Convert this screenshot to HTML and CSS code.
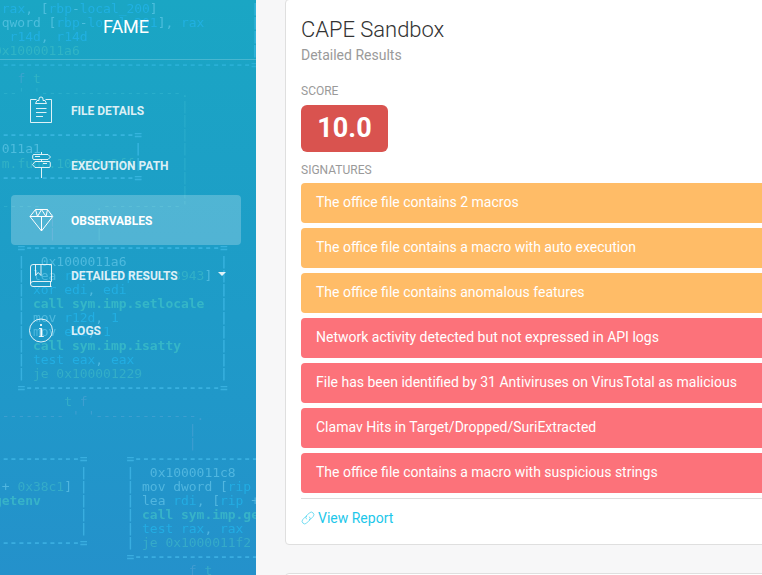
FILE: index.html
```html
<!DOCTYPE html>
<html lang="en">
<head>
<meta charset="utf-8">
<title>FAME</title>
<link rel="stylesheet" href="styles.css">
</head>
<body>
<div class="wrapper">
  <aside class="sidebar">
    <pre class="code" aria-hidden="true"> <i class="b">rax</i>, [<i class="b">rbp</i>-<i class="b">local_200</i>]            <i class="d">|</i>
 qword [<i class="b">rbp</i>-<i class="b">local_201</i>], <i class="b">rax</i>      <i class="d">|</i>
  <i class="b">r14d</i>, <i class="b">r14d</i>                     <i class="d">|</i>
<i class="g">0x1000011a6</i>                      <i class="d">|</i>
 <i class="d dim">--------------------------------=</i>
   <i class="f">f</i> <i class="g">t</i>
 <i class="k">--' '------------------.</i>
                        <i class="k">|</i>
                        <i class="k">|</i>
 <i class="d">-----------------=</i>     <i class="k">|</i>
 011a1            <i class="d">|</i>     <i class="k">|</i>
 <i class="g">m.func.100001a3ff</i><i class="d">|</i>     <i class="k">|</i>
 <i class="d">-----------------=</i>     <i class="k">|</i>
                        <i class="k">|</i>
 <i class="k">-----       .----------'</i>
       <i class="f">|</i>     <i class="k">|</i>
       <i class="f">|</i>     <i class="k">|</i>
   <i class="d">=-------------------------=</i>
   <i class="d">|</i>  0x1000011a6            <i class="d">|</i>
   <i class="d">|</i> lea <i class="b">rdi</i>, [<i class="b">rip</i> + <i class="g">0x3943</i>] <i class="d">|</i>
   <i class="d">|</i> <i class="b">xor edi</i>, <i class="b">edi</i>            <i class="d">|</i>
   <i class="d">|</i> <i class="h">call sym.imp.setlocale</i>  <i class="d">|</i>
   <i class="d">|</i> mov <i class="b">r12d</i>, <i class="b">1</i>             <i class="d">|</i>
   <i class="d">|</i> mov <i class="b">edi</i>, <i class="b">1</i>              <i class="d">|</i>
   <i class="d">|</i> <i class="h">call sym.imp.isatty</i>     <i class="d">|</i>
   <i class="d">|</i> <i class="b">test eax</i>, <i class="b">eax</i>           <i class="d">|</i>
   <i class="d">|</i> <i class="g">je 0x100001229</i>          <i class="d">|</i>
   <i class="d">=-------------------------=</i>
         <i class="g">t</i> <i class="f">f</i>
 <i class="f">-------- ' '-------------.</i>
                         <i class="f">|</i>
                         <i class="f">|</i>
 <i class="d">----------=     =----------------</i>
           <i class="d">|</i>     <i class="d">|</i>  0x1000011c8
 + <i class="g">0x38c1</i>] <i class="d">|</i>     <i class="d">|</i> mov dword [<i class="b">rip</i>
<i class="h">getenv</i>     <i class="d">|</i>     <i class="d">|</i> lea <i class="b">rdi</i>, [<i class="b">rip</i> +
           <i class="d">|</i>     <i class="d">|</i> <i class="h">call sym.imp.ge</i>
           <i class="d">|</i>     <i class="d">|</i> <i class="b">test rax</i>, <i class="b">rax</i>
 <i class="d">----------=     |</i> <i class="g">je 0x1000011f2</i>
                 <i class="d">=----------------</i>
                         <i class="f">f</i> <i class="g">t</i></pre>
    <div class="brand">FAME</div>
    <nav class="nav">
      <a class="item">
        <svg class="icon" viewBox="0 0 26 28"><path d="M8.500 3.500H2.500v23h21v-23h-6M7.500 7.500h11l-1.500-3h-2V3a2 2 0 0 0-4 0v1.500H9zM8 12.500h10.500M8 16.500h10.500M8 20.500h7"/></svg>
        <span>File Details</span>
      </a>
      <a class="item">
        <svg class="icon" viewBox="0 0 26 28"><path d="M13.500 1v2M13.500 8.500v2M13.500 17v10M6 3.500h14l2.500 2.500-2.500 2.500H6a1.300 1.300 0 0 1-1.300-1.300V4.800A1.300 1.300 0 0 1 6 3.500zM21 10.500H7L4.500 13.700 7 16.500h14a1.300 1.300 0 0 0 1.300-1.300v-3.400A1.300 1.300 0 0 0 21 10.500zM7 5.500h5M15 12.500h4"/></svg>
        <span>Execution Path</span>
      </a>
      <a class="item active">
        <svg class="icon" viewBox="0 0 26 28"><path d="M7.500 3.500h12l5.200 7L13.500 25 2 10.500zM2 10.500h22.500M13.500 25V10.500M7.500 3.500l2 7 4-7 4.500 7 1.500-7"/></svg>
        <span>Observables</span>
      </a>
      <a class="item">
        <svg class="icon" viewBox="0 0 26 28"><path d="M23.500 20.500v-17H5A2.500 2.500 0 0 0 2.500 6v17A2.500 2.500 0 0 0 5 25.500h18.500M2.500 23A2.500 2.500 0 0 1 5 20.500h18.500M22.500 20.500v5M7.500 3.500v11l2.700-3 2.800 3v-11"/></svg>
        <span>Detailed Results</span>
        <b class="caret"></b>
      </a>
      <a class="item">
        <svg class="icon" viewBox="0 0 26 28"><circle cx="13" cy="14.500" r="11.500"/><path d="M11 12.500h2.500v8M10.800 20.500h5"/><path class="bold" d="M13.300 12.500v8M13 8v2"/></svg>
        <span>Logs</span>
      </a>
    </nav>
  </aside>
  <main class="content">
    <section class="card">
      <h4 class="title">CAPE Sandbox</h4>
      <p class="category">Detailed Results</p>
      <div class="label">Score</div>
      <div class="score">10.0</div>
      <div class="label signatures">Signatures</div>
      <div class="alerts">
        <div class="alert warning">The office file contains 2 macros</div>
        <div class="alert warning">The office file contains a macro with auto execution</div>
        <div class="alert warning">The office file contains anomalous features</div>
        <div class="alert danger">Network activity detected but not expressed in API logs</div>
        <div class="alert danger">File has been identified by 31 Antiviruses on VirusTotal as malicious</div>
        <div class="alert danger">Clamav Hits in Target/Dropped/SuriExtracted</div>
        <div class="alert danger">The office file contains a macro with suspicious strings</div>
      </div>
      <div class="footer">
        <svg class="link" viewBox="0 0 14 14"><path d="M5.700 8.300a2.600 2.600 0 0 1 0-3.700l2.700-2.700a2.600 2.600 0 0 1 3.700 3.700L9.400 8.300a2.600 2.600 0 0 1-1.400.7M8.300 5.700a2.600 2.600 0 0 1 0 3.700l-2.700 2.700a2.600 2.600 0 0 1-3.700-3.700L4.600 5.700A2.600 2.600 0 0 1 6 5"/></svg>
        <a>View Report</a>
      </div>
    </section>
    <section class="card next"></section>
  </main>
</div>
</body>
</html>
```
FILE: styles.css
```css
* { box-sizing: border-box; }
body {
  margin: 0;
  font-family: Roboto, "Liberation Sans", sans-serif;
  font-size: 14px;
  background: #f7f7f8;
}
.wrapper { display: flex; height: 575px; overflow: hidden; }
.sidebar {
  position: relative;
  flex: 0 0 256px;
  overflow: hidden;
  color: #fff;
  background: linear-gradient(#1aa6c4, #1e9bc8 55%, #2491cb);
}
/* faint disassembly listing behind the menu */
.code {
  position: absolute;
  top: 2px;
  left: -6px;
  margin: 0;
  font: 13px/14.05px "DejaVu Sans Mono", monospace;
  letter-spacing: -0.036px;
  color: rgba(125, 215, 245, .5);
  filter: blur(.4px);
}
.code i { font-style: normal; }
.code .b { color: rgba(35, 180, 235, .75); }
.code .g { color: rgba(75, 200, 200, .45); }
.code .h { color: rgba(75, 210, 200, .5); font-weight: bold; }
.code .d { color: rgba(80, 200, 245, .5); font-weight: bold; }
.code .dim { color: rgba(60, 190, 235, .45); }
.code .k { color: rgba(70, 195, 215, .35); }
.code .f { color: rgba(90, 165, 215, .5); }
.brand {
  position: relative;
  height: 60px;
  padding: 12px 4px 0 0;
  border-bottom: 1px solid rgba(255, 255, 255, .2);
  font-size: 18px;
  line-height: 30px;
  text-align: center;
}
.nav {
  position: relative;
  display: flex;
  flex-direction: column;
  gap: 5px;
  padding: 25px 15px 0 11px;
}
.item {
  display: flex;
  align-items: center;
  height: 50px;
  padding: 0 15px 0 17px;
  border-radius: 4px;
  font-size: 12px;
  font-weight: 700;
  text-transform: uppercase;
  color: rgba(255, 255, 255, .86);
}
.item span { padding-top: 2px; }
.active { background: rgba(255, 255, 255, .23); color: #fff; }
.icon {
  width: 26px;
  height: 28px;
  margin-right: 17px;
  fill: none;
  stroke: currentColor;
  stroke-width: 1;
}
.bold { stroke-width: 2; }
.caret {
  margin: -3px 0 0 auto;
  border: 4px solid transparent;
  border-top-color: currentColor;
  border-bottom: 0;
}
.content { flex: 1; padding-left: 29px; }
.card {
  width: 520px;
  height: 546px;
  margin-top: -1px;
  padding: 15px 15px 0;
  background: #fff;
  border: 1px solid #dfdfdf;
  border-radius: 4px;
}
.next { margin-top: 28px; }
.title {
  margin: 0;
  font-size: 22px;
  font-weight: 300;
  line-height: 30px;
  letter-spacing: -0.03px;
  color: #333;
}
.category { margin: 0; line-height: 20px; color: #9a9a9a; }
.label {
  margin-top: 18px;
  font-size: 12px;
  line-height: 17px;
  text-transform: uppercase;
  color: #9a9a9a;
}
.score {
  width: 87px;
  height: 47px;
  margin-top: 5px;
  border-radius: 6px;
  background: #d9534f;
  color: #fff;
  font-size: 27px;
  font-weight: 700;
  line-height: 46px;
  text-align: center;
}
.signatures { margin-top: 10px; }
.alerts { display: flex; flex-direction: column; gap: 5px; margin-top: 4px; }
.alert {
  height: 40px;
  padding: 0 15px;
  border-radius: 4px;
  line-height: 38px;
  white-space: nowrap;
  color: #fff;
}
.warning { background: #ffbc67; }
.danger { background: #fc727a; }
.footer {
  display: flex;
  align-items: center;
  gap: 3px;
  margin-top: 5px;
  padding-top: 8px;
  border-top: 1px solid #ddd;
  line-height: 22px;
  color: #1dc7ea;
}
.link { width: 14px; height: 14px; fill: none; stroke: currentColor; stroke-width: .6; }
```
